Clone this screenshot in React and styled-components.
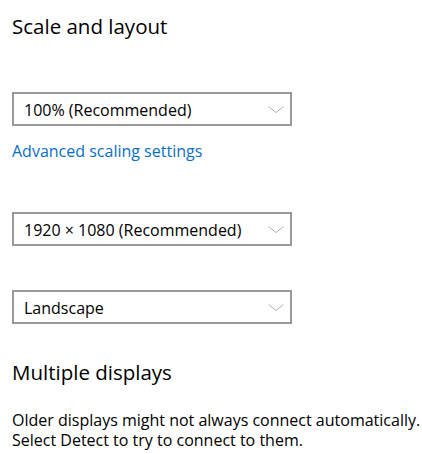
import React from "react";
import styled, { createGlobalStyle } from "styled-components";

const GlobalStyle = createGlobalStyle`
  html, body {
    margin: 0;
    padding: 0;
    background: #ffffff;
  }
  body {
    font-family: "Open Sans", "Noto Sans", sans-serif;
    color: #000000;
    overflow: hidden;
  }
`;

const Page = styled.div`
  width: 422px;
  height: 454px;
  padding-left: 12px;
  box-sizing: border-box;
  overflow: hidden;
`;

const Heading = styled.h2`
  margin: 0;
  padding-top: ${(p) => p.$top}px;
  font-size: 20.5px;
  font-weight: 400;
  line-height: 26px;
  white-space: nowrap;
`;

const Select = styled.div`
  display: flex;
  align-items: center;
  justify-content: space-between;
  box-sizing: border-box;
  width: 280px;
  height: 34px;
  margin-top: ${(p) => p.$top}px;
  padding: 1px 6px 0 10px;
  border: 2px solid #999999;
  font-size: 16px;
  white-space: nowrap;
`;

const Chevron = styled.svg`
  width: 16px;
  height: 7px;
  flex: none;
`;

const Link = styled.a`
  display: block;
  margin-top: 15px;
  color: #0a6fc2;
  font-size: 16px;
  line-height: 20px;
  text-decoration: none;
  white-space: nowrap;
`;

const Paragraph = styled.p`
  margin: 25px 0 0;
  font-size: 16px;
  line-height: 20px;
  white-space: nowrap;
`;

const Dropdown = ({ top, children }) => (
  <Select $top={top}>
    <span>{children}</span>
    <Chevron viewBox="0 0 16 7">
      <path d="M0.5 0.5 L8 6.5 L15.5 0.5" fill="none" stroke="#b0b0b0" strokeWidth="1" />
    </Chevron>
  </Select>
);

export default function App() {
  return (
    <>
      <GlobalStyle />
      <Page>
        <Heading $top={13}>Scale and layout</Heading>
        <Dropdown top={53}>100% (Recommended)</Dropdown>
        <Link href="#">Advanced scaling settings</Link>
        <Dropdown top={51}>1920 × 1080 (Recommended)</Dropdown>
        <Dropdown top={44}>Landscape</Dropdown>
        <Heading $top={35}>Multiple displays</Heading>
        <Paragraph>
          Older displays might not always connect automatically.
          <br />
          Select Detect to try to connect to them.
        </Paragraph>
      </Page>
    </>
  );
}
